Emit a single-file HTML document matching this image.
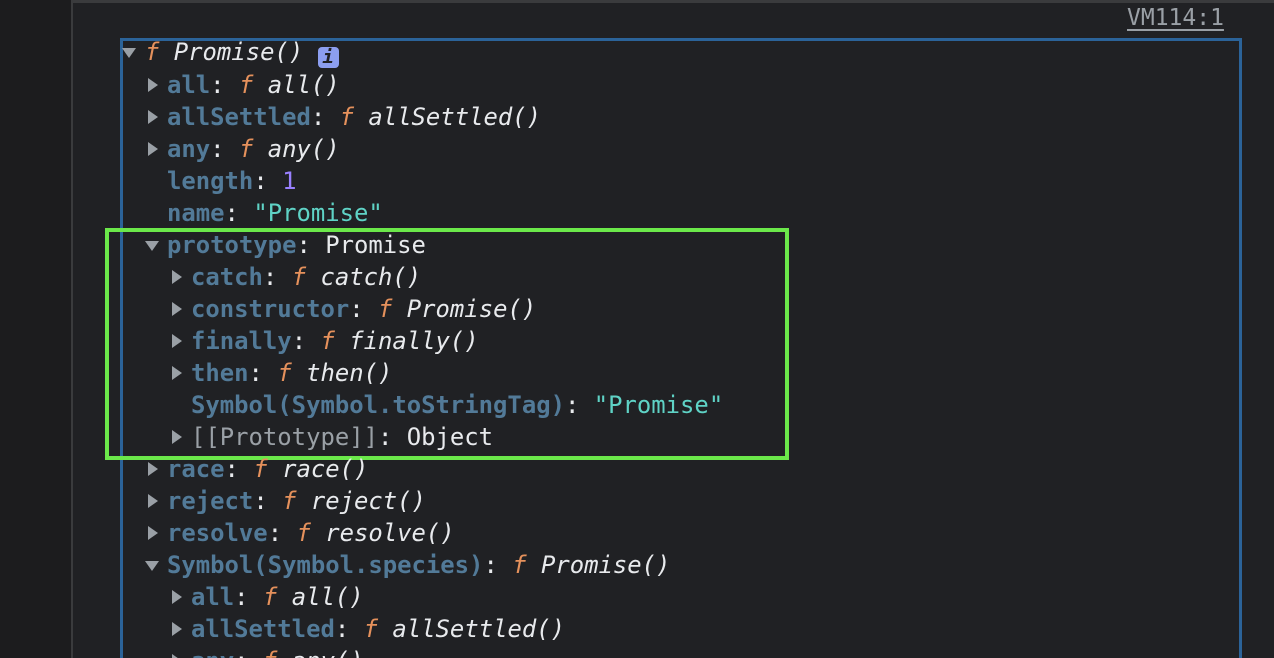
<!DOCTYPE html><html style="overflow:hidden;height:658px"><head><style>
body{margin:0;width:1274px;height:658px;background:#202124;overflow:hidden;position:relative;font-family:"DejaVu Sans Mono","Liberation Mono",monospace;font-size:23.9px;color:#e8eaed}
.l{position:absolute;left:0;top:0;width:71px;height:658px;background:#1c1c1e;border-right:2px solid #3a3b3d}
.t{position:absolute;left:0;top:0;width:1274px;height:3px;background:#3a3b3d}
.r{position:absolute;height:32px;line-height:32px;white-space:pre}
.k{color:#527a98;font-weight:bold}.f{color:#e5915c;font-style:italic}.i{font-style:italic}
.n{color:#9980ff}.s{color:#5fd3c6}.g{color:#9aa0a6}
.ar{display:inline-block;width:0;height:0;border-top:7px solid transparent;border-bottom:7px solid transparent;border-left:10px solid #9aa0a6;position:absolute;left:-19px;top:9px}
.ad{display:inline-block;width:0;height:0;border-left:7px solid transparent;border-right:7px solid transparent;border-top:10px solid #9aa0a6;position:absolute;left:-22px;top:12px}
</style></head><body>
<div class="t"></div><div class="l"></div>
<div style="position:absolute;left:1127px;top:5px;font-size:23px;color:#9aa0a6;text-decoration:underline;text-underline-offset:4px">VM114:1</div>
<div style="position:absolute;left:120px;top:38px;width:1116px;height:630px;border:3px solid #2b6399;box-sizing:content-box"></div>
<div style="position:absolute;left:105px;top:228px;width:676px;height:224px;border:4px solid #6be84a"></div>
<div class="r" style="left:145px;top:36px"><span class="ad" style="left:-23px"></span><span class="f">f</span><span class="i"> Promise()</span> <span style="display:inline-block;width:21px;height:21px;background:#8c9ef0;border-radius:4px;vertical-align:-3px;color:#202124;font-size:19px;line-height:21px;text-align:center;font-style:italic;font-weight:bold">i</span></div>
<div class="r" style="left:167px;top:69px"><span class="ar"></span><span class="k">all</span>: <span class="f">f</span><span class="i"> all()</span></div>
<div class="r" style="left:167px;top:101px"><span class="ar"></span><span class="k">allSettled</span>: <span class="f">f</span><span class="i"> allSettled()</span></div>
<div class="r" style="left:167px;top:133px"><span class="ar"></span><span class="k">any</span>: <span class="f">f</span><span class="i"> any()</span></div>
<div class="r" style="left:167px;top:165px"><span class="k">length</span>: <span class="n">1</span></div>
<div class="r" style="left:167px;top:197px"><span class="k">name</span>: <span class="s">"Promise"</span></div>
<div class="r" style="left:167px;top:229px"><span class="ad"></span><span class="k">prototype</span>: Promise</div>
<div class="r" style="left:191px;top:261px"><span class="ar"></span><span class="k">catch</span>: <span class="f">f</span><span class="i"> catch()</span></div>
<div class="r" style="left:191px;top:293px"><span class="ar"></span><span class="k">constructor</span>: <span class="f">f</span><span class="i"> Promise()</span></div>
<div class="r" style="left:191px;top:325px"><span class="ar"></span><span class="k">finally</span>: <span class="f">f</span><span class="i"> finally()</span></div>
<div class="r" style="left:191px;top:357px"><span class="ar"></span><span class="k">then</span>: <span class="f">f</span><span class="i"> then()</span></div>
<div class="r" style="left:191px;top:389px"><span class="k">Symbol(Symbol.toStringTag)</span>: <span class="s">"Promise"</span></div>
<div class="r" style="left:191px;top:421px"><span class="ar"></span><span class="g">[[Prototype]]</span>: Object</div>
<div class="r" style="left:167px;top:453px"><span class="ar"></span><span class="k">race</span>: <span class="f">f</span><span class="i"> race()</span></div>
<div class="r" style="left:167px;top:485px"><span class="ar"></span><span class="k">reject</span>: <span class="f">f</span><span class="i"> reject()</span></div>
<div class="r" style="left:167px;top:517px"><span class="ar"></span><span class="k">resolve</span>: <span class="f">f</span><span class="i"> resolve()</span></div>
<div class="r" style="left:167px;top:549px"><span class="ad"></span><span class="k">Symbol(Symbol.species)</span>: <span class="f">f</span><span class="i"> Promise()</span></div>
<div class="r" style="left:191px;top:581px"><span class="ar"></span><span class="k">all</span>: <span class="f">f</span><span class="i"> all()</span></div>
<div class="r" style="left:191px;top:613px"><span class="ar"></span><span class="k">allSettled</span>: <span class="f">f</span><span class="i"> allSettled()</span></div>
<div class="r" style="left:191px;top:645px"><span class="ar"></span><span class="k">any</span>: <span class="f">f</span><span class="i"> any()</span></div>
</body></html>
